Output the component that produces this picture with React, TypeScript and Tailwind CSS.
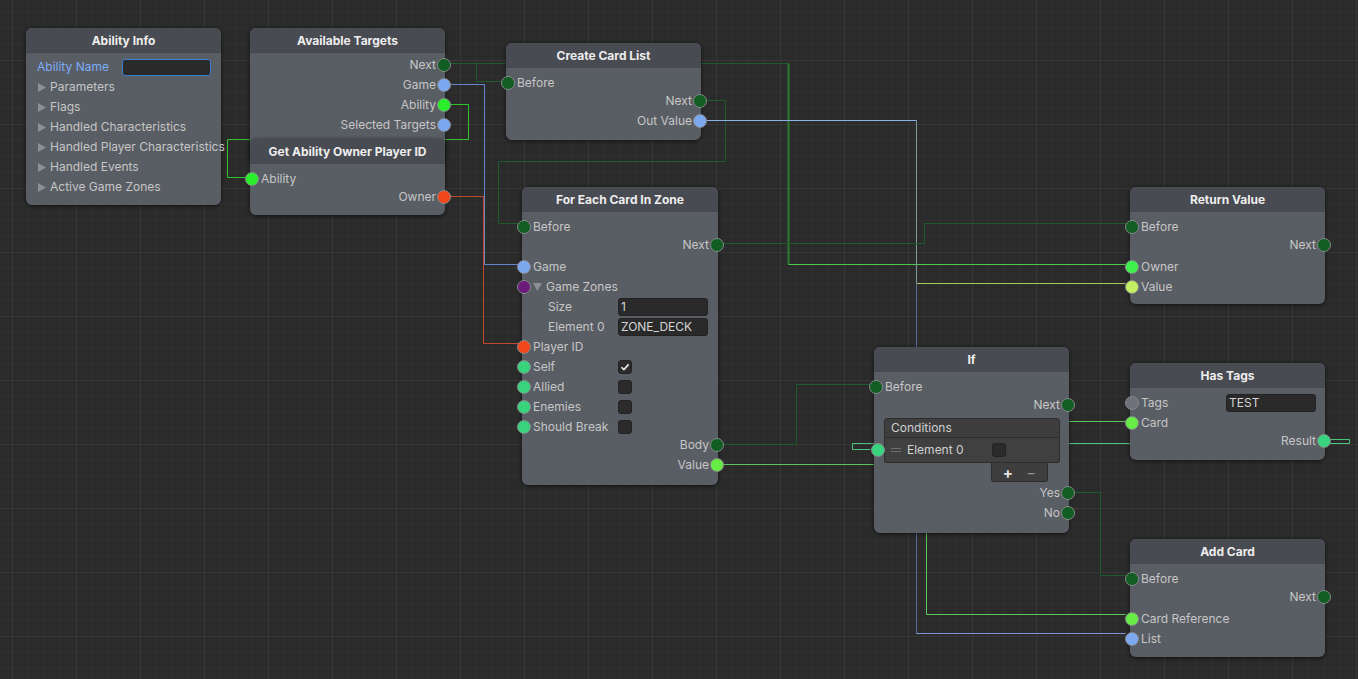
import React from "react";

// port colours
const flow = "bg-[#125d22]";
const blue = "bg-[#7ba8ee]";
const lime = "bg-[#2aee2a]";
const red = "bg-[#f2461b]";
const purple = "bg-[#6b1b79]";
const teal = "bg-[#38d47d]";
const green = "bg-[#66ec44]";
const owner = "bg-[#3ef04b]";
const yellow = "bg-[#c3f062]";
const grey = "bg-[#71717b]";

type Wire = { pts: string; c: string; w?: number };

const wires: Wire[] = [
  { pts: "445,104 468,104 468,139 227,139 227,177 246,177", c: "#2fc42f" },
  { pts: "445,63 788,63", c: "#1f5a2a" },
  { pts: "788,63 788,264", c: "#2b7a30", w: 2 },
  { pts: "788,264 1125,264", c: "#4cc84c" },
  { pts: "476,63 476,81 503,81", c: "#1f5a2a" },
  { pts: "445,84 484,84 484,264 518,264", c: "#6586c8" },
  { pts: "445,196 483,196 483,343 518,343", c: "#c0492c" },
  { pts: "701,100 725,100 725,161 498,161 498,223 518,223", c: "#1f5a2a" },
  { pts: "701,120 916,120", c: "#8cb2ea" },
  { pts: "916,120 916,283", c: "#7c9c9a" },
  { pts: "916,283 1125,283", c: "#a6c85a" },
  { pts: "916,283 916,633", c: "#5b6b98" },
  { pts: "916,633 1125,633", c: "#7c98d8" },
  { pts: "718,243 924,243 924,223 1125,223", c: "#1f5a2a" },
  { pts: "718,444 796,444 796,384 870,384", c: "#1f5a2a" },
  { pts: "718,464 926,464 926,614 1125,614", c: "#5ac85a" },
  { pts: "926,464 1000,464 1000,421 1125,421", c: "#5ac85a" },
  { pts: "1330,439 1349,439 1349,443 852,443 852,449 870,449", c: "#4cc479" },
  { pts: "1069,492 1100,492 1100,575 1125,575", c: "#1f5a2a" },
];

function Port({ color, out }: { color: string; out?: boolean }) {
  return (
    <span
      className={`absolute top-1/2 h-[14px] w-[14px] -translate-y-1/2 rounded-full border border-[#85888c] ${color} ${
        out ? "right-[-6px]" : "left-[-5px]"
      }`}
    />
  );
}

function In({
  label,
  color,
  className = "",
  children,
}: {
  label: string;
  color: string;
  className?: string;
  children?: React.ReactNode;
}) {
  return (
    <div className={`relative flex h-5 items-center pl-[11px] ${className}`}>
      <Port color={color} />
      <span className={children ? "w-[85px] shrink-0" : ""}>{label}</span>
      {children}
    </div>
  );
}

function Out({ label, color, className = "" }: { label: string; color: string; className?: string }) {
  return (
    <div className={`relative flex h-5 items-center justify-end pr-[9px] ${className}`}>
      <span>{label}</span>
      <Port color={color} out />
    </div>
  );
}

function Field({ value = "" }: { value?: string }) {
  return (
    <div className="h-[18px] w-[90px] rounded-[3px] border border-[#222222] bg-[#2a2a2a] px-[2px] leading-[16px] text-[#d6d6d6]">
      {value}
    </div>
  );
}

function Check({ on }: { on?: boolean }) {
  return (
    <div className="flex h-[14px] w-[14px] items-center justify-center rounded-[3px] border border-[#232323] bg-[#2b2b2b]">
      {on && (
        <svg width="10" height="10" viewBox="0 0 10 10">
          <path d="M1.5 5.2l2.4 2.4L8.6 2.4" fill="none" stroke="#eeeeee" strokeWidth="1.6" />
        </svg>
      )}
    </div>
  );
}

function Arrow({ down }: { down?: boolean }) {
  return down ? (
    <svg width="9" height="8" viewBox="0 0 9 8" className="shrink-0">
      <polygon points="0,0 9,0 4.5,8" fill="#8c8f93" />
    </svg>
  ) : (
    <svg width="8" height="9" viewBox="0 0 8 9" className="shrink-0">
      <polygon points="0,0 8,4.5 0,9" fill="#8c8f93" />
    </svg>
  );
}

function Node({
  pos,
  title,
  body,
  children,
}: {
  pos: string;
  title: string;
  body: string;
  children: React.ReactNode;
}) {
  return (
    <div className={`absolute rounded-[6px] bg-[#595d64] shadow-[0_1px_4px_rgba(0,0,0,0.6)] ${pos}`}>
      <div className="flex h-[25px] items-center justify-center rounded-t-[6px] border-b border-[#44474c] bg-[#484b51] pt-[2px] font-bold text-[#eeeeee]">
        {title}
      </div>
      <div className={body}>{children}</div>
    </div>
  );
}

export default function App() {
  return (
    <div className="relative h-[679px] w-[1358px] overflow-hidden bg-[#2b2b2b] font-['Inter',sans-serif] text-[12px] text-[#c6c6c6]">
      <svg className="absolute inset-0" width="1358" height="679">
        <defs>
          <pattern id="minor" width="16" height="16" x="12" y="12" patternUnits="userSpaceOnUse">
            <path d="M0.5 0V16M0 0.5H16" stroke="#303030" strokeWidth="1" fill="none" />
          </pattern>
          <pattern id="major" width="64" height="64" x="12" y="60" patternUnits="userSpaceOnUse">
            <path d="M0.5 0V64M0 0.5H64" stroke="#373737" strokeWidth="1" fill="none" />
          </pattern>
        </defs>
        <rect width="1358" height="679" fill="url(#minor)" />
        <rect width="1358" height="679" fill="url(#major)" />
        <g transform="translate(0.5 0.5)">
          {wires.map((w, i) => (
            <polyline key={i} points={w.pts} fill="none" stroke={w.c} strokeWidth={w.w ?? 1} />
          ))}
        </g>
      </svg>

      <Node pos="left-[26px] top-[28px] w-[195px]" title="Ability Info" body="pt-1 pb-2">
        <div className="flex h-5 items-center pl-[11px]">
          <span className="w-[85px] shrink-0 text-[#7cacf4]">Ability Name</span>
          <div className="h-[17px] w-[89px] rounded-[3px] border border-[#3b7fd0] bg-[#2a2a2a]" />
        </div>
        {[
          "Parameters",
          "Flags",
          "Handled Characteristics",
          "Handled Player Characteristics",
          "Handled Events",
          "Active Game Zones",
        ].map((t) => (
          <div key={t} className="flex h-5 items-center gap-1 whitespace-nowrap pl-3">
            <Arrow />
            <span>{t}</span>
          </div>
        ))}
      </Node>

      <Node pos="left-[250px] top-[28px] w-[195px]" title="Available Targets" body="pt-[2px] pb-6">
        <Out label="Next" color={flow} />
        <Out label="Game" color={blue} />
        <Out label="Ability" color={lime} />
        <Out label="Selected Targets" color={blue} />
      </Node>

      <Node pos="left-[250px] top-[139px] w-[195px]" title="Get Ability Owner Player ID" body="pt-[5px] pb-2">
        <In label="Ability" color={lime} />
        <Out label="Owner" color={red} className="-mt-[2px]" />
      </Node>

      <Node pos="left-[506px] top-[43px] w-[195px]" title="Create Card List" body="pt-[5px] pb-[9px]">
        <In label="Before" color={flow} />
        <Out label="Next" color={flow} className="-mt-[2px]" />
        <Out label="Out Value" color={blue} />
      </Node>

      <Node pos="left-[522px] top-[187px] w-[196px]" title="For Each Card In Zone" body="pt-[5px] pb-[10px]">
        <In label="Before" color={flow} />
        <Out label="Next" color={flow} className="-mt-[2px]" />
        <In label="Game" color={blue} className="mt-[2px]" />
        <div className="relative flex h-5 items-center gap-[4px] pl-[11px]">
          <Port color={purple} />
          <Arrow down />
          <span>Game Zones</span>
        </div>
        <div className="flex h-5 items-center pl-[26px]">
          <span className="w-[70px] shrink-0">Size</span>
          <Field value="1" />
        </div>
        <div className="flex h-5 items-center pl-[26px]">
          <span className="w-[70px] shrink-0">Element 0</span>
          <Field value="ZONE_DECK" />
        </div>
        <In label="Player ID" color={red} />
        <In label="Self" color={teal}>
          <Check on />
        </In>
        <In label="Allied" color={teal}>
          <Check />
        </In>
        <In label="Enemies" color={teal}>
          <Check />
        </In>
        <In label="Should Break" color={teal}>
          <Check />
        </In>
        <Out label="Body" color={flow} className="-mt-[2px]" />
        <Out label="Value" color={green} />
      </Node>

      <Node pos="left-[874px] top-[347px] w-[195px]" title="If" body="pt-[5px] pb-[10px]">
        <In label="Before" color={flow} />
        <Out label="Next" color={flow} className="-mt-[2px]" />
        <div className="relative ml-[10px] mr-[9px] mt-[3px]">
          <div className="flex h-5 items-center rounded-t-[3px] border border-[#2c2c2c] bg-[#3e3e3e] pl-[6px] text-[#d0d0d0]">
            Conditions
          </div>
          <div className="relative flex h-[25px] items-center rounded-b-[3px] border border-t-0 border-[#2c2c2c] bg-[#404040] pl-[6px]">
            <span className="absolute left-[-14px] top-1/2 h-[14px] w-[14px] -translate-y-1/2 rounded-full border border-[#85888c] bg-[#38d47d]" />
            <svg width="10" height="6" viewBox="0 0 10 6" className="shrink-0">
              <path d="M0 1.5H10M0 4.5H10" stroke="#6c6c6c" strokeWidth="1" />
            </svg>
            <span className="ml-[6px] w-[85px] shrink-0 text-[#d0d0d0]">Element 0</span>
            <Check />
          </div>
          <div className="ml-[107px] flex h-[19px] w-[57px] items-center justify-around rounded-b-[3px] border border-t-0 border-[#2c2c2c] bg-[#3e3e3e] px-1">
            <span className="text-[15px] font-bold leading-none text-[#e4e4e4]">+</span>
            <span className="text-[15px] leading-none text-[#8f8f8f]">−</span>
          </div>
        </div>
        <Out label="Yes" color={flow} className="mt-[1px]" />
        <Out label="No" color={flow} />
      </Node>

      <Node pos="left-[1130px] top-[187px] w-[195px]" title="Return Value" body="pt-[5px] pb-[7px]">
        <In label="Before" color={flow} />
        <Out label="Next" color={flow} className="-mt-[2px]" />
        <In label="Owner" color={owner} className="mt-[2px]" />
        <In label="Value" color={yellow} />
      </Node>

      <Node pos="left-[1130px] top-[363px] w-[195px]" title="Has Tags" body="pt-[5px] pb-[9px]">
        <In label="Tags" color={grey}>
          <Field value="TEST" />
        </In>
        <In label="Card" color={green} />
        <Out label="Result" color={teal} className="-mt-[2px]" />
      </Node>

      <Node pos="left-[1130px] top-[539px] w-[195px]" title="Add Card" body="pt-[5px] pb-2">
        <In label="Before" color={flow} />
        <Out label="Next" color={flow} className="-mt-[2px]" />
        <In label="Card Reference" color={green} className="mt-[2px]" />
        <In label="List" color={blue} />
      </Node>
    </div>
  );
}
